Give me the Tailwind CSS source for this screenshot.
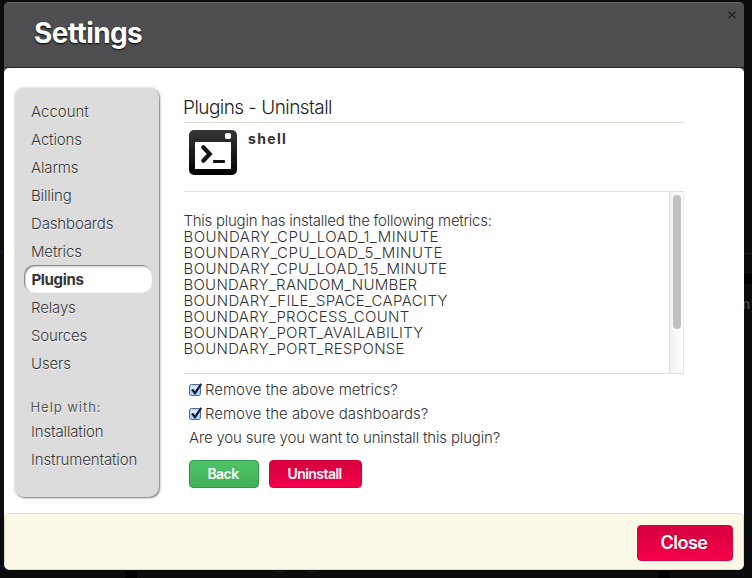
<!DOCTYPE html>
<html lang="en">
<head>
<meta charset="utf-8">
<title>Settings</title>
<script src="https://cdn.jsdelivr.net/npm/@tailwindcss/browser@4"></script>
</head>
<body class="relative h-[578px] w-[752px] overflow-hidden bg-[#0c0c0d] pl-[4px] pt-[2px] font-['Inter','Liberation_Sans',sans-serif] font-light text-[15px] text-[#333]">
  <!-- dimmed page behind the dialog -->
  <div class="absolute left-[744px] top-[253px] h-px w-2 bg-[#101d38]"></div>
  <div class="absolute left-[744px] top-[274px] h-[10px] w-2 bg-black"></div>
  <div class="absolute left-[742px] top-[296px] text-[13px] leading-4 font-bold text-[#444047]">n</div>
  <div class="absolute left-0 top-[252px] h-px w-1 bg-[#101d38]"></div>
  <div class="absolute left-0 top-[566px] h-px w-1 bg-[#101d38]"></div>
  <div class="absolute left-[125px] top-[571px] h-[7px] w-3 bg-black"></div>
  <div class="absolute left-[274px] top-[571px] h-px w-[10px] bg-[#101d38]"></div>
  <div class="absolute left-[308px] top-[571px] h-px w-[10px] bg-[#101d38]"></div>
  <div class="absolute left-[658px] top-[571px] h-[7px] w-3 bg-black"></div>

  <div class="relative flex h-[568px] w-[740px] flex-col overflow-hidden rounded-[5px] bg-[#4e4e50]">
    <header class="flex h-[66px] shrink-0 justify-between border-t border-b border-t-[#626264] border-b-[#242426] bg-[repeating-linear-gradient(45deg,#4d4d4f_0_1px,#505052_1px_3px)] pl-[30px]">
      <h1 class="pt-[12px] text-[28px] leading-[36px] font-bold tracking-[-0.6px] text-white [text-shadow:0_1px_2px_#000]">Settings</h1>
      <svg class="mt-[8px] mr-[8px] size-2" viewBox="0 0 8 8" fill="none" stroke="#202022" stroke-width="1.3"><path d="M.5.8 7.5 7.2M7.5.8.5 7.2"/></svg>
    </header>

    <main class="flex h-[446px] shrink-0 rounded-t-[5px] bg-white pt-[19px] pl-[10px]">
      <nav class="flex h-[410px] w-[145px] shrink-0 flex-col rounded-[10px] bg-[#dcdcdc] pt-[11px] pl-[10px] leading-[28px] tracking-[-0.15px] shadow-[1px_1px_2px_#777,inset_1px_1px_1px_#e8e8e8] [text-shadow:0_1px_0_#fff]">
        <a class="h-7 pl-[7px] tracking-normal">Account</a>
        <a class="h-7 pl-[7px]">Actions</a>
        <a class="h-7 pl-[7px]">Alarms</a>
        <a class="h-7 pl-[7px]">Billing</a>
        <a class="h-7 pl-[7px]">Dashboards</a>
        <a class="h-7 pl-[7px]">Metrics</a>
        <a class="-mt-px mb-px h-7 w-[128px] rounded-[10px] bg-white pt-px pl-[7.5px] font-bold tracking-[-0.35px] shadow-[inset_1px_1px_2px_#666]">Plugins</a>
        <a class="h-7 pl-[7px]">Relays</a>
        <a class="h-7 pl-[7px]">Sources</a>
        <a class="h-7 pl-[7px]">Users</a>
        <h4 class="mt-[16px] h-[24px] pl-[6.5px] text-[13px] leading-[26px] font-normal tracking-[0.95px] text-[#555]">Help with:</h4>
        <a class="h-7 pl-[7px]">Installation</a>
        <a class="h-7 pl-[7px]">Instrumentation</a>
      </nav>

      <section class="ml-[25px] w-[500px]">
        <h2 class="h-[36px] border-b border-[#e0e0d4] pt-[7px] text-[19px] leading-[28px] tracking-[-0.55px] whitespace-nowrap text-[#222]"><span class="-ml-px">Plugins - Uninstall</span></h2>
        <div class="flex h-[68px] pt-[7px] pl-[5px]">
          <svg class="h-[45px] w-12 shrink-0" viewBox="0 0 48 45">
            <defs><linearGradient id="g" x1="0" y1="0" x2="0" y2="1"><stop stop-color="#363636"/><stop offset="1" stop-color="#000"/></linearGradient></defs>
            <rect width="48" height="45" rx="5" fill="url(#g)"/>
            <rect x="36" y="3" width="6" height="6" rx="1.8" fill="#fff"/>
            <path d="M6 12h36v27H6z" fill="#fff"/>
            <path d="m14.3 17.3 6.4 6.7-6.4 6.7" fill="none" stroke="#151515" stroke-width="4.2" stroke-linecap="round"/>
            <rect x="24" y="30" width="12" height="3" rx="1" fill="#111"/>
          </svg>
          <h3 class="ml-[11px] text-[14px] leading-[18px] font-bold tracking-[1.35px]">shell</h3>
        </div>
        <div class="flex h-[183px] justify-between border-y border-[#e0e0d4]">
          <div class="-ml-[0.5px] pt-[21px] leading-[16px] tracking-[0.28px] whitespace-nowrap">
            <p class="tracking-[-0.26px]">This plugin has installed the following metrics:</p>
            <p class="tracking-[0.48px]">BOUNDARY_CPU_LOAD_1_MINUTE</p>
            <p class="tracking-[0.48px]">BOUNDARY_CPU_LOAD_5_MINUTE</p>
            <p class="tracking-[0.45px]">BOUNDARY_CPU_LOAD_15_MINUTE</p>
            <p class="tracking-[0.25px]">BOUNDARY_RANDOM_NUMBER</p>
            <p class="tracking-[0.37px]">BOUNDARY_FILE_SPACE_CAPACITY</p>
            <p>BOUNDARY_PROCESS_COUNT</p>
            <p>BOUNDARY_PORT_AVAILABILITY</p>
            <p>BOUNDARY_PORT_RESPONSE</p>
          </div>
          <div class="w-[15px] border-x border-l-[#dedede] border-r-[#e8e8e8] bg-linear-to-r from-[#f2f2f2] to-white pt-[3px] pl-[3px]">
            <div class="h-[134px] w-2 rounded-full bg-[#c1c1c1]"></div>
          </div>
        </div>
        <div class="pt-[4px] pl-[5px] leading-[24px] whitespace-nowrap">
          <label class="flex h-6 items-center">
            <svg class="mr-[2px] -mt-px h-[14px] w-[14px] overflow-visible" viewBox="0 0 14 14"><rect x=".5" y="1.5" width="11" height="11" rx="2" fill="#a9d0f5" stroke="#5369a0"/><path d="M1.5 3h9v3h-9z" fill="#d6e8fb"/><path d="m3 6.5 3 3.7L12.2.8" fill="none" stroke="#101c38" stroke-width="2.1"/></svg>
            <span>Remove the above metrics?</span>
          </label>
          <label class="flex h-6 items-center">
            <svg class="mr-[2px] -mt-px h-[14px] w-[14px] overflow-visible" viewBox="0 0 14 14"><rect x=".5" y="1.5" width="11" height="11" rx="2" fill="#a9d0f5" stroke="#5369a0"/><path d="M1.5 3h9v3h-9z" fill="#d6e8fb"/><path d="m3 6.5 3 3.7L12.2.8" fill="none" stroke="#101c38" stroke-width="2.1"/></svg>
            <span>Remove the above dashboards?</span>
          </label>
          <p class="tracking-[-0.17px]">Are you sure you want to uninstall this plugin?</p>
          <div class="mt-[10px] flex gap-[10px] text-[14px] leading-[26px] font-semibold tracking-[-0.55px] text-white [text-shadow:0_-1px_0_rgba(0,0,0,.2)]">
            <button class="h-7 w-[70px] rounded-[4px] border border-[#34964a] bg-linear-to-b from-[#4fc469] to-[#3fb058] pr-[2px]">Back</button>
            <button class="h-7 w-[93px] rounded-[4px] border border-[#d8003e] bg-linear-to-b from-[#d6003d] to-[#f5004c] pr-[2px]">Uninstall</button>
          </div>
        </div>
      </section>
    </main>

    <div class="h-[56px] shrink-0 bg-linear-to-b from-white from-50% to-[#0c0c0d] to-50%">
      <footer class="-mt-px flex h-[57px] justify-end rounded-[5px] border border-[#deded2] bg-[#fbf8e7] pt-[11px] pr-[10px]">
        <button class="h-9 w-24 rounded-[4px] border border-[#d8003e] bg-linear-to-b from-[#d6003d] to-[#f5004c] pr-[2px] text-[18px] leading-[34px] font-semibold tracking-[-0.5px] text-white [text-shadow:0_-1px_0_rgba(0,0,0,.3)]">Close</button>
      </footer>
    </div>
  </div>
</body>
</html>
